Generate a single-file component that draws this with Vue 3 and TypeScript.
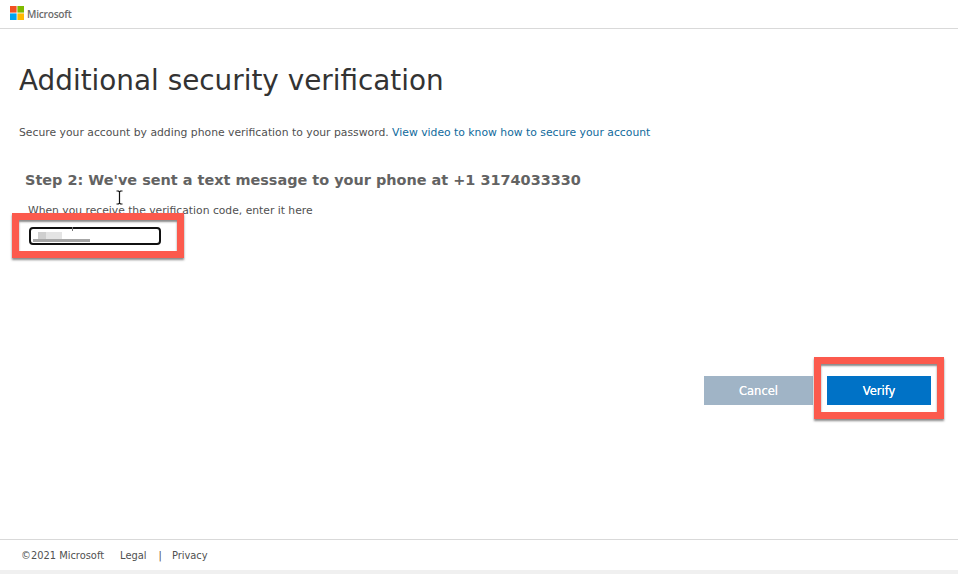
<script setup lang="ts">
const phone = "+1 3174033330";
</script>

<template>
  <div class="page">
    <header class="top">
      <svg class="logo" width="14" height="14" viewBox="0 0 14 14">
        <rect x="0" y="0" width="6.6" height="6.6" fill="#f25022" />
        <rect x="7.4" y="0" width="6.6" height="6.6" fill="#7fba00" />
        <rect x="0" y="7.4" width="6.6" height="6.6" fill="#00a4ef" />
        <rect x="7.4" y="7.4" width="6.6" height="6.6" fill="#ffb900" />
      </svg>
      <span class="brand">Microsoft</span>
    </header>

    <main class="content">
      <h1>Additional security verification</h1>
      <p class="lead">
        Secure your account by adding phone verification to your password.
        <a href="#">View video to know how to secure your account</a>
      </p>

      <h2>Step 2: We've sent a text message to your phone at {{ phone }}</h2>
      <label class="hint" for="code">When you receive the verification code, enter it here</label>
      <div class="field">
        <input id="code" type="text" />
        <span class="blur-a"></span>
        <span class="blur-b"></span>
        <span class="blur-c"></span>
        <span class="caret"></span>
        <span class="mark mark-field"></span>
      </div>
      <svg class="ibeam" width="7" height="15" viewBox="0 0 7 15">
        <path d="M0.5 1h2l1 1 1-1h2M3.5 2v11M0.5 14h2l1-1 1 1h2" fill="none" stroke="#111" stroke-width="1.2" />
      </svg>

      <div class="actions">
        <button class="btn cancel" type="button">Cancel</button>
        <button class="btn verify" type="button">Verify</button>
        <span class="mark mark-verify"></span>
      </div>
    </main>

    <footer class="bottom">
      <span>©2021 Microsoft</span>
      <a href="#" class="legal">Legal</a>
      <span class="sep">|</span>
      <a href="#">Privacy</a>
    </footer>
    <div class="strip"></div>
  </div>
</template>

<style scoped>
.page {
  position: relative;
  display: flex;
  flex-direction: column;
  width: 958px;
  height: 574px;
  background: #fff;
  font-family: "DejaVu Sans", Verdana, sans-serif;
  color: #505050;
  overflow: hidden;
}

.top {
  display: flex;
  align-items: center;
  gap: 3px;
  height: 29px;
  padding: 0 0 1px 10px;
  box-sizing: border-box;
  border-bottom: 1px solid #d9d9d9;
}

.brand {
  font-family: "Open Sans", sans-serif;
  font-size: 10.2px;
  font-weight: 600;
  color: #6b6b6b;
  letter-spacing: -0.25px;
  margin-top: 1px;
}

.logo {
  margin-top: -1px;
}

.content {
  position: relative;
  flex: 1;
  padding: 0 19px;
}

h1 {
  margin: 36px 0 0;
  font-size: 27.85px;
  line-height: 32px;
  font-weight: 400;
  color: #333;
}

.lead {
  margin: 28px 0 0;
  font-size: 10.8px;
  line-height: 16px;
  color: #505050;
}

.lead a {
  color: #0f6a9c;
  text-decoration: none;
}

h2 {
  margin: 29px 0 0 6px;
  font-size: 14.45px;
  line-height: 20px;
  font-weight: 700;
  color: #636363;
}

.hint {
  display: block;
  margin: 14px 0 0 9px;
  font-size: 10.75px;
  line-height: 14px;
  color: #505050;
}

.field {
  position: relative;
  width: 132px;
  height: 18px;
  margin: 9px 0 0 10px;
}

.field input {
  display: block;
  width: 100%;
  height: 100%;
  box-sizing: border-box;
  border: 2px solid #111;
  border-radius: 4px;
  background: #fff;
  padding: 0;
  outline: none;
}

.blur-a,
.blur-b,
.blur-c {
  position: absolute;
  background: #cfcfcf;
}

.blur-a {
  left: 9px;
  top: 5px;
  width: 8px;
  height: 7px;
}

.blur-b {
  left: 17px;
  top: 5px;
  width: 16px;
  height: 7px;
  background: #e4e4e4;
}

.blur-c {
  left: 4px;
  top: 12px;
  width: 57px;
  height: 3px;
  background: #a6a6a6;
}

.caret {
  position: absolute;
  left: 43px;
  top: 0;
  width: 1px;
  height: 4px;
  background: #777;
}

.mark {
  position: absolute;
  box-sizing: border-box;
  border: 7px solid #fc5a4d;
  box-shadow: 0 2px 2px rgba(60, 60, 60, 0.6), inset 0 2px 2px rgba(60, 60, 60, 0.6);
  pointer-events: none;
}

.mark-field {
  left: -17px;
  top: -14px;
  width: 172px;
  height: 45px;
}

.ibeam {
  position: absolute;
  left: 116px;
  top: 161px;
}

.actions {
  position: absolute;
  left: 704px;
  top: 347px;
  display: flex;
  gap: 14px;
}

.btn {
  height: 29px;
  border: 0;
  padding: 0;
  color: #fff;
  font-family: "DejaVu Sans", Verdana, sans-serif;
  font-size: 11.5px;
  font-weight: 400;
  text-shadow: 0 0 0.6px #fff;
}

.cancel {
  width: 109px;
  background: #a0b4c6;
}

.verify {
  width: 104px;
  background: #0072c6;
}

.mark-verify {
  left: 110px;
  top: -19px;
  width: 130px;
  height: 62px;
}

.bottom {
  display: flex;
  align-items: center;
  height: 31px;
  padding: 1px 0 0 21px;
  box-sizing: border-box;
  border-top: 1px solid #d9d9d9;
  font-size: 9.9px;
  color: #505050;
}

.bottom a {
  color: #505050;
  text-decoration: none;
}

.legal {
  margin-left: 16px;
}

.sep {
  margin: 0 10px 0 12px;
}

.strip {
  height: 4px;
  background: #f0f0f0;
}
</style>

<style>
body {
  margin: 0;
}
</style>
